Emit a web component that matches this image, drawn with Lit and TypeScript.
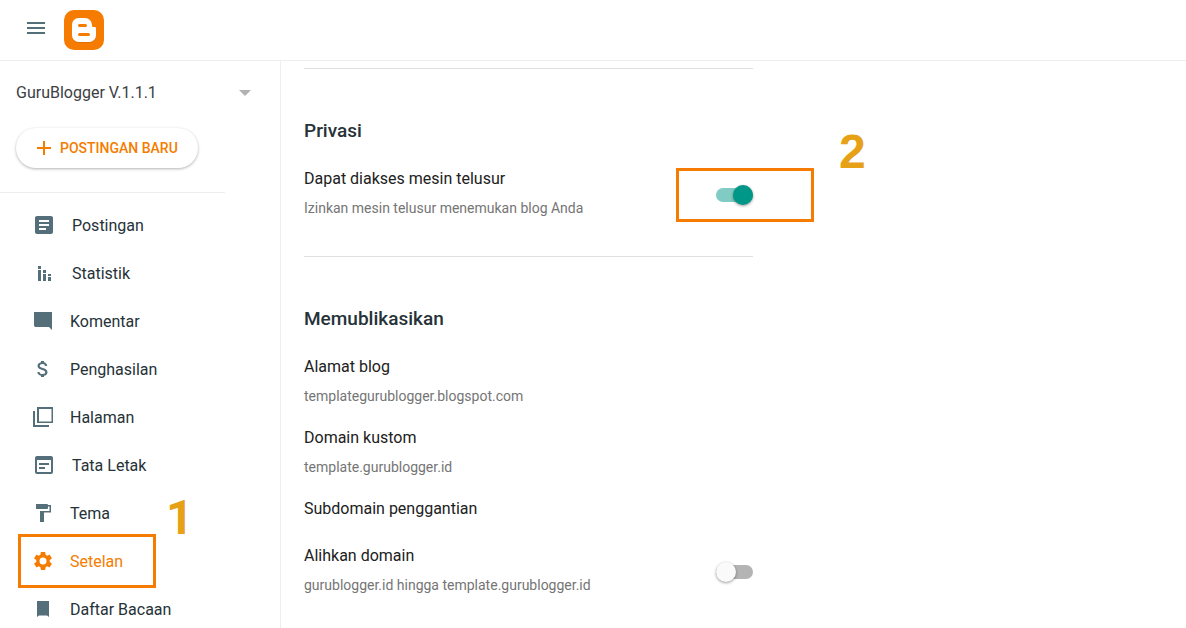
import { LitElement, html, css, svg, nothing } from "lit";
import { customElement, property, state } from "lit/decorators.js";

type NavItem = { id: string; label: string; wide?: boolean; icon: unknown };
type Setting = { id: string; label: string; detail?: string; toggle?: boolean; marker?: string };
type Section = { title: string; settings: Setting[] };

const NAV: NavItem[] = [
  {
    id: "posts",
    label: "Postingan",
    wide: true,
    icon: svg`<path d="M19 3H5c-1.100 0-2 .9-2 2v14c0 1.100.9 2 2 2h14c1.100 0 2-.9 2-2V5c0-1.100-.9-2-2-2zm-5 14H7v-2h7v2zm3-4H7v-2h10v2zm0-4H7V7h10v2z"/>`,
  },
  {
    id: "stats",
    label: "Statistik",
    wide: true,
    icon: svg`<path d="M6 5h3v3H6zM6 9h3v11H6zM11 9h3v3h-3zM11 13h3v7h-3zM16 13h3v2h-3zM16 16h3v4h-3z"/>`,
  },
  {
    id: "comments",
    label: "Komentar",
    icon: svg`<path d="M3 3h18v18l-3-3H5c-1.100 0-2-.6-2-1.500z"/>`,
  },
  {
    id: "earnings",
    label: "Penghasilan",
    icon: svg`<path d="M11.800 10.900c-2.270-.59-3-1.200-3-2.150 0-1.090 1.010-1.850 2.700-1.850 1.780 0 2.440.85 2.500 2.100h2.210c-.07-1.720-1.120-3.300-3.210-3.810V4h-3v1.160c-1.940.42-3.500 1.680-3.500 3.610 0 2.310 1.910 3.460 4.700 4.130 2.500.6 3 1.480 3 2.410 0 .69-.49 1.790-2.700 1.790-2.060 0-2.870-.92-2.980-2.100h-2.200c.12 2.190 1.760 3.420 3.680 3.830V20h3v-1.150c1.950-.37 3.500-1.500 3.500-3.550 0-2.840-2.430-3.810-4.700-4.400z"/>`,
  },
  {
    id: "pages",
    label: "Halaman",
    icon: svg`<path d="M6 2h16v16H6zM8 4v12.500h12.500V4zM2 6h2v14h14v2H2z" fill-rule="evenodd"/>`,
  },
  {
    id: "layout",
    label: "Tata Letak",
    wide: true,
    icon: svg`<path fill-rule="evenodd" d="M5 3h14a2 2 0 0 1 2 2v14a2 2 0 0 1-2 2H5a2 2 0 0 1-2-2V5a2 2 0 0 1 2-2zM5 7v12h14V7zM7 10h10v2H7zM7 14h6v2H7z"/>`,
  },
  {
    id: "theme",
    label: "Tema",
    icon: svg`<path d="M5 3h11a1 1 0 0 1 1 1h3v7.500h-7V21H9V10h9.500V5.500H17V7a1 1 0 0 1-1 1H5z"/>`,
  },
  {
    id: "settings",
    label: "Setelan",
    icon: svg`<path d="M19.430 12.980c.04-.32.07-.64.07-.98s-.03-.66-.07-.98l2.110-1.650c.19-.15.24-.42.12-.64l-2-3.460c-.12-.22-.39-.3-.61-.22l-2.490 1c-.52-.4-1.080-.73-1.690-.98l-.38-2.650C14.460 2.180 14.250 2 14 2h-4c-.25 0-.46.18-.49.42l-.38 2.650c-.61.25-1.170.59-1.690.98l-2.490-1c-.23-.09-.49 0-.61.22l-2 3.460c-.13.22-.07.49.12.64l2.110 1.650c-.04.32-.07.65-.07.98s.03.66.07.98l-2.110 1.650c-.19.15-.24.42-.12.64l2 3.460c.12.22.39.3.61.22l2.490-1c.52.4 1.080.73 1.690.98l.38 2.650c.03.24.24.42.49.42h4c.25 0 .46-.18.49-.42l.38-2.650c.61-.25 1.170-.59 1.690-.98l2.490 1c.23.09.49 0 .61-.22l2-3.460c.12-.22.07-.49-.12-.64l-2.110-1.650zM12 15.900a3.900 3.900 0 1 1 0-7.800 3.900 3.900 0 0 1 0 7.800z" fill-rule="evenodd" transform="translate(1.200 1.200) scale(.9)"/>`,
  },
  {
    id: "reading",
    label: "Daftar Bacaan",
    icon: svg`<path d="M6 4h12v16l-2-1.500h-8L6 20z"/>`,
  },
];

const SECTIONS: Section[] = [
  {
    title: "Privasi",
    settings: [
      {
        id: "search",
        label: "Dapat diakses mesin telusur",
        detail: "Izinkan mesin telusur menemukan blog Anda",
        toggle: true,
        marker: "2",
      },
    ],
  },
  {
    title: "Memublikasikan",
    settings: [
      { id: "address", label: "Alamat blog", detail: "templategurublogger.blogspot.com" },
      { id: "domain", label: "Domain kustom", detail: "template.gurublogger.id" },
      { id: "subdomain", label: "Subdomain penggantian" },
      {
        id: "redirect",
        label: "Alihkan domain",
        detail: "gurublogger.id hingga template.gurublogger.id",
        toggle: true,
      },
    ],
  },
];

@customElement("blog-sidebar")
class BlogSidebar extends LitElement {
  @property() current = "settings";

  static styles = css`
    :host {
      display: block;
      box-sizing: border-box;
      border-right: 1px solid #eeeeee;
      overflow: hidden;
    }
    .blog {
      display: flex;
      align-items: center;
      justify-content: space-between;
      width: 100%;
      padding: 20px 29px 20px 16px;
      border: 0;
      background: none;
      color: #3c4043;
      font: 16px/24px Roboto, sans-serif;
      text-align: left;
    }
    .arrow {
      width: 12px;
      height: 6px;
      fill: #b2b2b2;
    }
    .new {
      display: flex;
      align-items: center;
      gap: 9px;
      height: 40px;
      margin: 3px 0 0 16px;
      padding: 0 20px 0 21px;
      border: 0;
      border-radius: 20px;
      background: #ffffff;
      box-shadow: 0 1px 3px rgba(0, 0, 0, 0.3);
      color: #f57c00;
      font: 500 14px/20px Roboto, sans-serif;
    }
    .plus {
      width: 14px;
      height: 14px;
      fill: currentColor;
    }
    .nav {
      margin: 0;
      padding: 0;
      list-style: none;
    }
    .rule {
      width: 225px;
      height: 1px;
      margin: 24px 0 8px;
      border: 0;
      background: #eeeeee;
    }
    .item {
      position: relative;
    }
    .link {
      display: flex;
      align-items: center;
      gap: 16px;
      height: 48px;
      padding-left: 32px;
      color: #263238;
      text-decoration: none;
      font: 16px/24px Roboto, sans-serif;
    }
    .text {
      padding-top: 2px;
    }
    .icon {
      width: 22px;
      height: 24px;
      fill: #546e7a;
    }
    .icon.wide {
      width: 24px;
    }
    .link.current {
      color: #f57c00;
    }
    .current .icon {
      fill: #f57c00;
    }
    .frame {
      position: absolute;
      top: -3px;
      left: 18px;
      box-sizing: border-box;
      width: 138px;
      height: 54px;
      border: 3px solid #f57c00;
      pointer-events: none;
    }
    .number {
      position: absolute;
      top: -43px;
      left: 166px;
      color: #e6a117;
      font: bold 48px/48px Roboto, sans-serif;
    }
  `;

  render() {
    return html`
      <button class="blog" aria-haspopup="listbox">
        GuruBlogger V.1.1.1
        <svg class="arrow" viewBox="0 0 12 6" aria-hidden="true"><path d="M0 0h12L6 6z" /></svg>
      </button>
      <button class="new">
        <svg class="plus" viewBox="0 0 14 14" aria-hidden="true"><path d="M6 0h2v6h6v2H8v6H6V8H0V6h6z" /></svg>
        POSTINGAN BARU
      </button>
      <hr class="rule" />
      <nav>
        <ul class="nav">
          ${NAV.map((item) => {
            const current = item.id === this.current;
            return html`<li class="item">
              <a class="link ${current ? "current" : ""}" href="#${item.id}" aria-current=${current ? "page" : "false"}>
                <svg
                  class="icon ${item.wide ? "wide" : ""}"
                  viewBox=${item.wide ? "0 0 24 24" : "1 0 22 24"}
                  aria-hidden="true"
                >
                  ${item.icon}
                </svg>
                <span class="text">${item.label}</span>
              </a>
              ${current ? html`<span class="frame"></span><span class="number">1</span>` : nothing}
            </li>`;
          })}
        </ul>
      </nav>
    `;
  }
}

@customElement("blog-settings")
class BlogSettings extends LitElement {
  @state() private enabled: Record<string, boolean> = { search: true, redirect: false };

  static styles = css`
    :host {
      display: block;
      padding: 7px 24px 0 23px;
      font-family: Roboto, sans-serif;
    }
    .section {
      max-width: 449px;
      padding: 50px 0 36px;
      border-top: 1px solid #e0e0e0;
    }
    .title {
      margin: 0 0 23px;
      color: #263238;
      font-size: 19px;
      font-weight: 500;
      line-height: 24px;
    }
    .list {
      display: flex;
      flex-direction: column;
      gap: 17px;
    }
    .setting {
      display: flex;
      justify-content: space-between;
      align-items: center;
    }
    .label {
      display: block;
      padding-bottom: 4px;
      color: #212121;
      font-size: 16px;
      line-height: 26px;
    }
    .detail {
      margin: 0;
      color: #757575;
      font-size: 14px;
      line-height: 24px;
    }
    .control {
      position: relative;
      display: flex;
      align-items: center;
      height: 20px;
      margin-top: 4px;
    }
    .switch {
      position: relative;
      appearance: none;
      width: 37px;
      height: 14px;
      margin: 0;
      border-radius: 7px;
      background: #b4b4b4;
    }
    .switch::after {
      content: "";
      position: absolute;
      top: -3px;
      left: 0;
      width: 20px;
      height: 20px;
      border-radius: 50%;
      background: #fafafa;
      box-shadow: 0 1px 3px rgba(0, 0, 0, 0.4);
    }
    .switch:checked {
      background: #80cbc4;
    }
    .switch:checked::after {
      left: 17px;
      background: #009688;
    }
    .frame {
      position: absolute;
      top: -17px;
      left: -40px;
      box-sizing: border-box;
      width: 138px;
      height: 54px;
      border: 3px solid #f57c00;
      pointer-events: none;
    }
    .number {
      position: absolute;
      top: -57px;
      left: 123px;
      color: #e6a117;
      font: bold 48px/48px "Liberation Sans", sans-serif;
    }
  `;

  private toggle(id: string, event: Event) {
    this.enabled = { ...this.enabled, [id]: (event.target as HTMLInputElement).checked };
  }

  private renderSetting(s: Setting) {
    return html`<div class="setting">
      <div>
        ${s.toggle
          ? html`<label class="label" for=${s.id}>${s.label}</label>`
          : html`<span class="label">${s.label}</span>`}
        ${s.detail ? html`<p class="detail">${s.detail}</p>` : nothing}
      </div>
      ${s.toggle
        ? html`<div class="control">
            <input
              class="switch"
              type="checkbox"
              role="switch"
              id=${s.id}
              .checked=${this.enabled[s.id]}
              @change=${(e: Event) => this.toggle(s.id, e)}
            />
            ${s.marker ? html`<span class="frame"></span><span class="number">${s.marker}</span>` : nothing}
          </div>`
        : nothing}
    </div>`;
  }

  render() {
    return SECTIONS.map(
      (section) => html`<section class="section">
        <h2 class="title">${section.title}</h2>
        <div class="list">${section.settings.map((s) => this.renderSetting(s))}</div>
      </section>`
    );
  }
}

@customElement("app-root")
class AppRoot extends LitElement {
  static styles = css`
    :host {
      display: flex;
      flex-direction: column;
      height: 100vh;
      overflow: hidden;
      background: #ffffff;
      font-family: Roboto, sans-serif;
    }
    .header {
      display: flex;
      align-items: center;
      gap: 16px;
      padding: 10px 24px;
      border-bottom: 1px solid #eeeeee;
    }
    .menu {
      width: 24px;
      height: 24px;
      margin-bottom: 4px;
      padding: 0;
      border: 0;
      background: none;
    }
    .bars {
      display: block;
      fill: #546e7a;
    }
    .logo {
      display: block;
      width: 40px;
      height: 40px;
    }
    .body {
      display: grid;
      grid-template-columns: 281px 1fr;
      flex: 1;
      min-height: 0;
    }
  `;

  render() {
    return html`
      <header class="header">
        <button class="menu" aria-label="Menu">
          <svg class="bars" width="24" height="24" viewBox="0 0 24 24"><path d="M3 6h18v2H3zM3 11h18v2H3zM3 16h18v2H3z" /></svg>
        </button>
        <a href="#home" aria-label="Blogger">
          <svg class="logo" viewBox="0 0 40 40">
            <rect width="40" height="40" rx="10" fill="#f57c00" />
            <path
              fill="#d96b00"
              d="M8 26h24a6.500 6.500 0 0 1-6.500 6.800h-11A6.500 6.500 0 0 1 8 26z"
            />
            <path
              fill="#fff"
              fill-rule="evenodd"
              d="M14.500 8h6.500a7 7 0 0 1 7 7v.5c0 1 .5 1.500 1.500 1.500h1c1 0 1.500.6 1.500 1.500V25.500a6.500 6.500 0 0 1-6.500 6.500H14.500a6.500 6.500 0 0 1-6.500-6.500V14.500a6.500 6.500 0 0 1 6.500-6.500zM15.500 14a1.500 1.500 0 0 0 0 3h6a1.500 1.500 0 0 0 0-3zM15.500 23a1.500 1.500 0 0 0 0 3h9a1.500 1.500 0 0 0 0-3z"
            />
          </svg>
        </a>
      </header>
      <div class="body">
        <blog-sidebar></blog-sidebar>
        <blog-settings role="main"></blog-settings>
      </div>
    `;
  }
}
